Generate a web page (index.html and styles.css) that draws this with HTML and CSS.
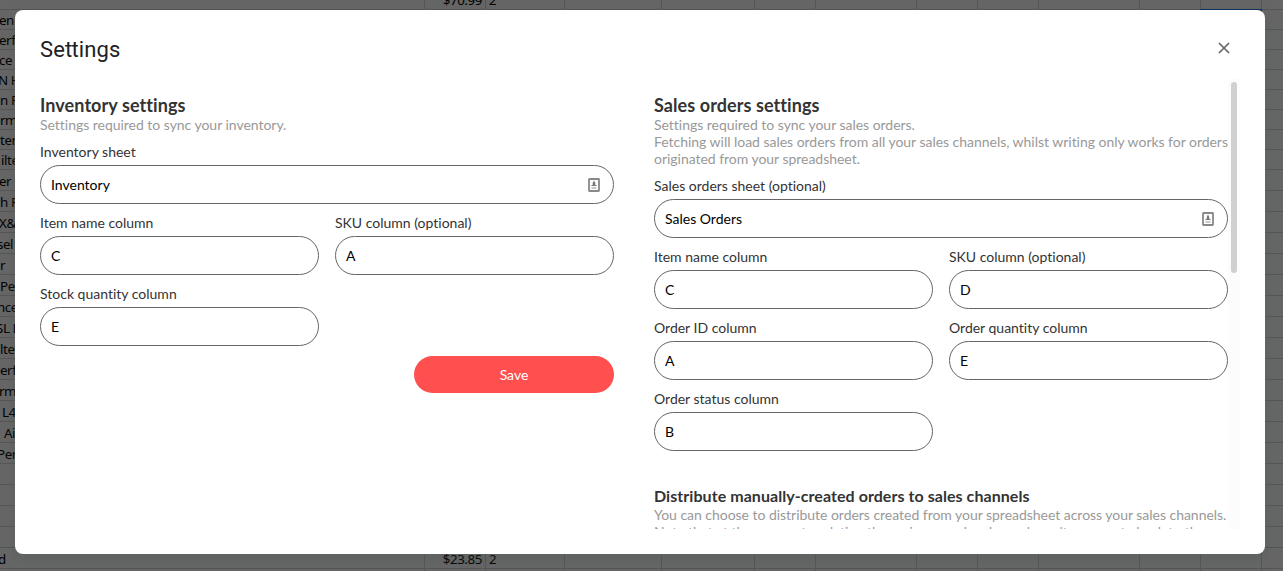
FILE: index.html
```
<!DOCTYPE html>
<html lang="en">
<head>
<meta charset="utf-8">
<title>Settings</title>
<link rel="stylesheet" href="styles.css">
</head>
<body>
<div class="sheet">
  <div class="rows" id="rows"></div>
  <div class="cols" id="cols"></div>
  <div class="selection"></div>
</div>
<div class="shade"></div>
<main class="modal">
  <header class="modal-head">
    <h1 class="title">Se<span class="pair">t</span>tings</h1>
    <svg class="close" viewBox="0 0 12 12"><path d="M1 1L11 11M11 1L1 11"/></svg>
  </header>
  <div class="content">
    <section class="panel">
      <h2 class="heading">Inventory settings</h2>
      <p class="desc">Settings required to sync your inventory.</p>
      <div class="fields">
        <label class="field wide"><span class="label">Inventory sheet</span><span class="input">Inventory<svg class="card" viewBox="0 0 12 14"><rect class="frame" x="1" y="1" width="10" height="12" rx=".5"/><path class="figure" d="M6 2.6L7.3 5V7H8.5V8H3.5V7H4.7V5z"/><path class="line" d="M3.5 9.2H8.5V10.8H3.5z"/></svg></span></label>
        <label class="field"><span class="label">Item name column</span><span class="input">C</span></label>
        <label class="field"><span class="label">SKU column (optional)</span><span class="input">A</span></label>
        <label class="field"><span class="label">Stock quantity column</span><span class="input">E</span></label>
      </div>
      <button class="save">Save</button>
    </section>
    <section class="panel">
      <h2 class="heading">Sales orders settings</h2>
      <p class="desc">Settings required to sync your sales orders.<br>Fetching will load sales orders from all your sales channels, whilst writing only works for orders<br>originated from your spreadsheet.</p>
      <div class="fields">
        <label class="field wide"><span class="label">Sales orders sheet (optional)</span><span class="input">Sales Orders<svg class="card" viewBox="0 0 12 14"><rect class="frame" x="1" y="1" width="10" height="12" rx=".5"/><path class="figure" d="M6 2.6L7.3 5V7H8.5V8H3.5V7H4.7V5z"/><path class="line" d="M3.5 9.2H8.5V10.8H3.5z"/></svg></span></label>
        <label class="field"><span class="label">Item name column</span><span class="input">C</span></label>
        <label class="field"><span class="label">SKU column (optional)</span><span class="input">D</span></label>
        <label class="field"><span class="label">Order ID column</span><span class="input">A</span></label>
        <label class="field"><span class="label">Order quantity column</span><span class="input">E</span></label>
        <label class="field"><span class="label">Order status column</span><span class="input">B</span></label>
      </div>
      <h3 class="subheading">Distribute manually-created orders to sales channels</h3>
      <p class="desc">You can choose to distribute orders created from your spreadsheet across your sales channels.<br>Note that at the moment updating the assignee order channel won't propagate back to the</p>
    </section>
    <div class="track"><div class="thumb"></div></div>
  </div>
</main>
<script src="sheet.js"></script>
</body>
</html>
```
FILE: styles.css
```
* { box-sizing: border-box; }
body { margin: 0; width: 1283px; height: 571px; overflow: hidden; position: relative; background: #fff; font-family: Lato, sans-serif; font-size: 14px; line-height: 17px; font-variant-ligatures: none; }
.sheet { position: absolute; inset: 0; overflow: hidden; font: 13.33px/20px "Noto Sans", sans-serif; letter-spacing: -.4px; color: #000; }
.row { display: flex; height: 21px; line-height: 22px; border-bottom: 1px solid #d8d8d8; white-space: pre; }
.row.short { height: 20px; line-height: 20px; }
.row.first { height: 10px; line-height: 20px; }
.row.first .cell { margin-top: -10px; }
.cell.name { width: 425px; flex: none; }
.cell.price { width: 61px; flex: none; text-align: right; padding-right: 4px; }
.cell.count { padding-left: 3px; }
.cols { position: absolute; inset: 0; display: flex; }
.col { flex: none; border-right: 1px solid #d8d8d8; }
.selection { position: absolute; left: 1200px; top: 9px; width: 62px; height: 20px; border: 2px solid #1a73e8; border-top-width: 1px; }
.shade { position: absolute; inset: 0; background: rgba(0, 0, 0, .6); }
.modal { position: absolute; left: 15px; top: 10px; width: 1250px; height: 544px; padding: 25px; border-radius: 8px; background: #fff; box-shadow: 0 4px 16px rgba(72, 88, 84, .35); display: flex; flex-direction: column; }
.modal-head { height: 44px; flex: none; display: flex; justify-content: space-between; padding-right: 10px; }
.title { margin: 0; padding-top: 1px; font: 400 22px/28px Roboto, sans-serif; letter-spacing: .15px; color: #202124; }
.pair { letter-spacing: -.8px; }
.close { width: 12px; height: 12px; margin-top: 7px; fill: none; stroke: #666; stroke-width: 1.7; }
.content { height: 450px; width: 1200px; display: flex; overflow: hidden; }
.panel { width: 574px; flex: none; padding-top: 15px; margin-right: 40px; }
.panel + .panel { margin-right: 0; }
.heading { margin: 0; font-size: 18px; line-height: 22px; font-weight: 700; letter-spacing: .08px; color: #333; }
.subheading { margin: 35px 0 0; font-size: 16px; line-height: 19px; padding-bottom: 1px; font-weight: 700; letter-spacing: .06px; color: #333; }
.desc { margin: 0; color: #999; white-space: nowrap; letter-spacing: -.03px; }
.fields { display: grid; grid-template-columns: 1fr 1fr; column-gap: 16px; }
.wide { grid-column: span 2; }
.field { display: flex; flex-direction: column; padding-top: 10px; }
.label { height: 22px; color: #333; }
.input { height: 39px; border: 1px solid #666; border-radius: 20px; padding: 0 13px 0 10px; display: flex; align-items: center; justify-content: space-between; color: #000; }
.card { width: 12px; height: 14px; }
.frame { fill: #fff; stroke: #888; stroke-width: 1.8; }
.figure { fill: #777; }
.line { fill: #bbb; }
.save { display: block; width: 200px; height: 37px; margin: 10px 0 0 auto; border: 0; border-radius: 19px; background: #ff4f4f; color: #fff; font: 14px/17px Lato, sans-serif; }
.track { width: 12px; background: #fcfcfc; padding: 3px; flex: none; }
.thumb { height: 191px; border-radius: 3px; background: #d0d0d0; }
```
FILE: sheet.js
```
// Each entry: visible name, horizontal offset, price, count
const data = [
  ["", 0, "$70.99", "2"], ["en", -1], ["erfo", -1], ["ce A", -1], ["N H", -2], ["n F", 0], ["rma", 0], ["ter", 0], ["ilte", 1],
  ["er H", -1], ["h R", 0], ["X&", -1], ["sel", -3], ["r", 0], ["Per", 0], ["nce", -3], ["SL L", -4], ["lte", 0], ["erf", 0], ["rma", -1],
  ["L4", 2], ["Air", 4], ["Per", -3], ["", 0], ["", 0], ["", 0], ["", 0], ["d", -2, "$23.85", "2"], ["", 0]
];
document.getElementById("rows").innerHTML = data.map((r, i) =>
  `<div class="row ${i === 0 ? "first" : i < 9 ? "short" : ""}"><div class="cell name" style="text-indent:${r[1]}px">${r[0].replace("&", "&amp;")}</div><div class="cell price">${r[2] || ""}</div><div class="cell count">${r[3] || ""}</div></div>`).join("");
document.getElementById("cols").innerHTML = [425, 61, 79, 97, 93, 61, 101, 61, 61, 101, 61, 61].map(w =>
  `<div class="col" style="width:${w}px"></div>`).join("");
```
